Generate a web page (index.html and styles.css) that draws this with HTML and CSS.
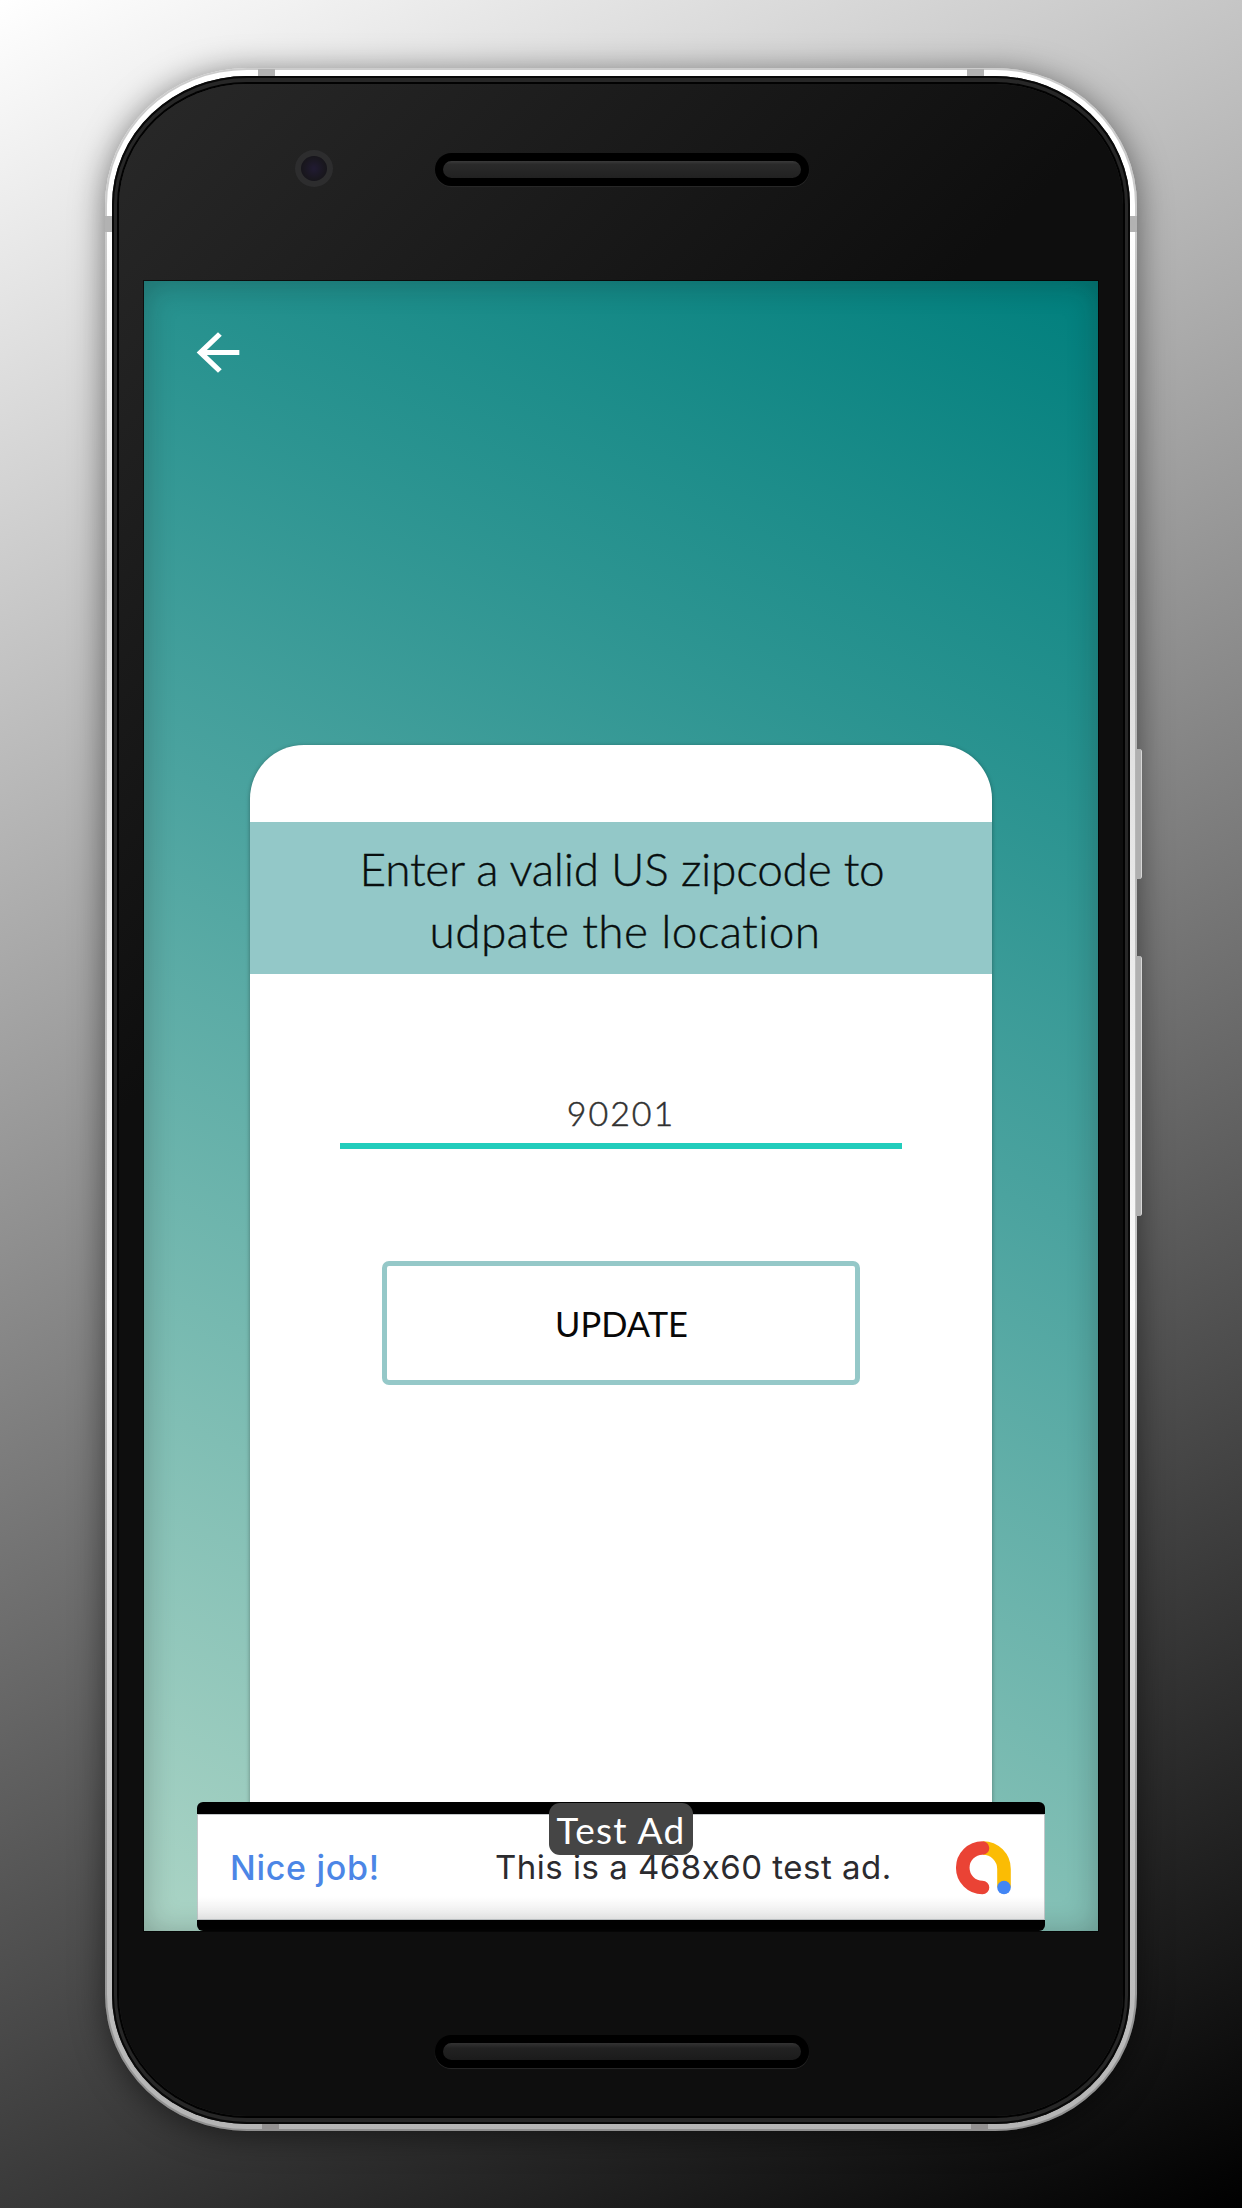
FILE: index.html
```html
<!DOCTYPE html>
<html lang="en">
<head>
<meta charset="utf-8">
<title>Update location</title>
<link rel="stylesheet" href="styles.css">
</head>
<body>
<div class="phone">
  <i class="seam seam-top seam-start"></i><i class="seam seam-top seam-end"></i>
  <i class="seam seam-left"></i><i class="seam seam-right"></i>
  <i class="seam seam-bottom seam-start"></i><i class="seam seam-bottom seam-end"></i>
  <i class="key power"></i><i class="key volume"></i>
  <div class="bezel">
    <div class="face">
      <div class="top">
        <i class="camera"></i>
        <i class="speaker"></i>
      </div>
      <main class="screen">
        <header class="bar">
          <svg class="back" viewBox="0 0 24 24" preserveAspectRatio="none"><path fill="#fff" d="M20 11H7.83l5.59-5.59L12 4l-8 8 8 8 1.41-1.41L7.83 13H20v-2z"/></svg>
        </header>
        <section class="card">
          <h1 class="title"><span class="line1">Enter a valid US zipcode to</span><br><span class="line2">udpate the location</span></h1>
          <div class="field"><span>90201</span></div>
          <button class="update" type="button">UPDATE</button>
        </section>
        <aside class="ad">
          <div class="ad-body">
            <span class="nice">Nice job!</span>
            <span class="message">This is a 468x60 test ad.</span>
            <svg class="logo" viewBox="0 0 56 56">
              <g fill="none" stroke-width="13.6">
                <path stroke="#fbbc04" d="M28 8A21 21 0 0 1 49 29V47"/>
                <path stroke="#ea4335" stroke-linecap="round" d="M27.500 8A19.750 19.750 0 0 0 27.500 47.500"/>
              </g>
              <circle cx="49" cy="47.500" r="6.800" fill="#4285f4"/>
            </svg>
          </div>
          <div class="badge">Test Ad</div>
        </aside>
      </main>
      <i class="speaker speaker-bottom"></i>
    </div>
  </div>
</div>
</body>
</html>
```
FILE: styles.css
```css
* { box-sizing: border-box; }
body {
  margin: 0;
  width: 1242px;
  height: 2208px;
  padding: 68px 105px 0;
  overflow: hidden;
  background: linear-gradient(152.7deg, #fff, #000);
  font-family: Lato, "Open Sans", sans-serif;
  font-variant-ligatures: none;
}
.phone {
  position: relative;
  width: 1032px;
  height: 2063px;
  padding: 8px 7px 7px;
  border-radius: 142px / 137px;
  background: linear-gradient(#fff 0, #fff 8%, #dadada 25%, #fafafa 60%, #c8c8c8 85%, #b4b4b4);
  box-shadow: inset 0 0 0 2px rgba(0,0,0,.2), 0 4px 32px rgba(0,0,0,.5);
}
.seam { position: absolute; background: #b2b2b2; }
.seam-top, .seam-bottom { width: 17px; height: 7px; }
.seam-top { top: 1px; }
.seam-bottom { bottom: 1px; height: 6px; background: #929090; }
.seam-top.seam-start { left: 153px; }
.seam-top.seam-end { left: 862px; }
.seam-bottom.seam-start { left: 157px; }
.seam-bottom.seam-end { left: 866px; }
.seam-left, .seam-right { top: 148px; width: 7px; height: 16px; }
.seam-left { left: 0; }
.seam-right { right: 0; }
.key {
  position: absolute;
  left: 1031px;
  width: 6px;
  background: #b0b0b0;
  border-right: 1px solid #d8d8d8;
  border-radius: 0 3px 3px 0;
}
.power { top: 681px; height: 130px; }
.volume { top: 888px; height: 260px; }
.bezel {
  height: 2048px;
  padding: 8px 7px;
  border-radius: 135px / 129px;
  background: #272727;
  box-shadow: inset 0 0 0 2px #080808;
}
.face {
  height: 2032px;
  padding: 0 25px;
  border-radius: 128px / 121px;
  background: linear-gradient(135deg, #292929 0, #0e0e0e 34%);
  box-shadow: 0 0 0 2px #020202;
}
.top { height: 197px; display: flex; align-items: flex-start; padding: 66px 0 0 151px; }
.camera {
  width: 38px;
  height: 37px;
  border-radius: 50%;
  border: 6px solid #2d2d2e;
  background: radial-gradient(circle, #211b33, #19171e 60%, #121116);
}
.speaker {
  display: block;
  width: 374px;
  height: 33px;
  margin: 3px 0 0 102px;
  border: 8px solid #000;
  border-radius: 17px;
  background: linear-gradient(#3a3a3a, #2a2a2a 20%, #212121);
  box-shadow: 0 1px 1px #2a2a2a;
}
.speaker-bottom { margin: 104px auto 0 291px; background: linear-gradient(#333, #222 30%, #1b1b1b); }
.screen {
  width: 954px;
  height: 1650px;
  position: relative;
  display: flex;
  flex-direction: column;
  align-items: center;
  background: linear-gradient(207deg, #007f7d, #4ba39f 45%, #abd4c5);
  box-shadow: 0 0 0 1px rgba(0,0,0,.6);
  overflow: hidden;
}
.screen::after {
  content: "";
  position: absolute;
  inset: 0;
  box-shadow: inset 0 2px 30px rgba(20,20,20,.27);
  pointer-events: none;
}
.bar { width: 100%; height: 464px; padding: 41px 42px; }
.back { display: block; width: 64px; height: 61px; }
.card {
  width: 742px;
  flex: 1;
  display: flex;
  flex-direction: column;
  align-items: center;
  padding-top: 77px;
  background: #fff;
  border-radius: 54px 54px 0 0;
  box-shadow: 0 1px 4px rgba(0,0,0,.35);
}
.title {
  width: 100%;
  height: 152px;
  margin: 0;
  padding: 16px 0 0 2px;
  background: #93c8c8;
  color: #080e0e;
  font-size: 46px;
  font-weight: 300;
  line-height: 62px;
  text-align: center;
  white-space: nowrap;
  -webkit-text-stroke: .4px #080e0e;
}
.line1 { letter-spacing: -.25px; }
.line2 { padding-left: 6px; letter-spacing: .35px; }
.field {
  width: 562px;
  height: 58px;
  margin-top: 117px;
  border-bottom: 6px solid #22cdbc;
  color: #303030;
  font-size: 34px;
  font-weight: 300;
  line-height: 43px;
  letter-spacing: 2px;
  text-align: center;
  -webkit-text-stroke: .5px #303030;
}
.update {
  width: 478px;
  height: 124px;
  margin-top: 112px;
  padding: 1px 0 0 1px;
  border: 5px solid #95c8c8;
  border-radius: 7px;
  background: #fff;
  color: #080808;
  font: 400 34.500px Lato, sans-serif;
}
.ad {
  position: absolute;
  left: 53px;
  bottom: 0;
  width: 848px;
  height: 129px;
  padding: 12px 0 11px;
  border-radius: 6px;
  background: #000;
}
.ad-body {
  height: 106px;
  display: flex;
  align-items: center;
  padding-left: 32px;
  background: linear-gradient(#fff 78%, #ececec);
  border: 1px solid #c4c8ca;
  font-family: Inter, sans-serif;
  font-size: 33px;
  font-feature-settings: "calt" 0;
  white-space: nowrap;
}
.nice { width: 265px; color: #4c86e6; font-weight: 500; font-size: 34px; letter-spacing: .7px; }
.message { width: 460px; color: #2b2b2f; letter-spacing: .5px; }
.logo { width: 56px; height: 56px; flex: none; margin-top: 2px; }
.badge {
  position: absolute;
  left: 352px;
  top: 1px;
  width: 144px;
  height: 52px;
  border-radius: 11px;
  background: #454545;
  color: #fff;
  font-size: 37px;
  line-height: 53px;
  letter-spacing: 1.300px;
  text-align: center;
}
```
